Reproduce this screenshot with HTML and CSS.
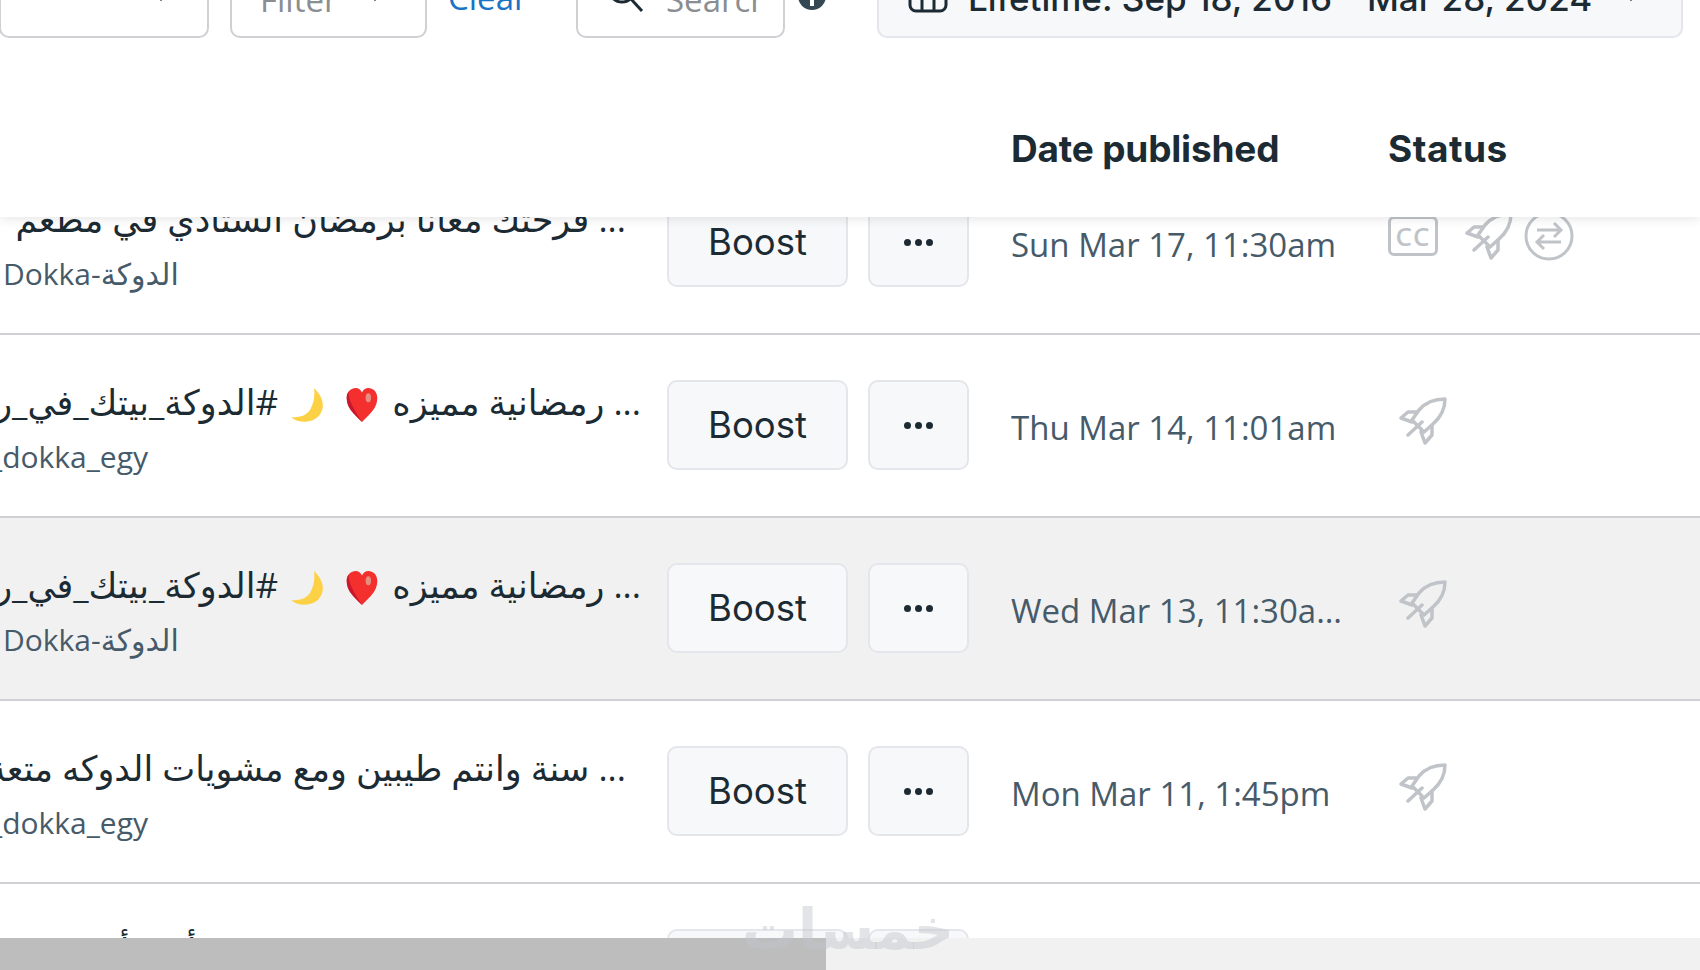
FILE: index.html
```html
<!DOCTYPE html>
<html lang="en">
<head>
    <meta charset="UTF-8">
    <meta name="viewport" content="width=device-width, initial-scale=1.0">
    <title>Published posts</title>
    <link rel="stylesheet" href="styles.css">
</head>
<body>
    <div class="page">
        <div class="top">
            <div class="toolbar">
                <div class="control first"><svg class="chev" viewBox="0 0 20 12"><path d="M3 2l7 7 7-7"/></svg></div>
                <div class="control filter"><span class="muted">Filter</span><svg class="chev" viewBox="0 0 20 12"><path d="M3 2l7 7 7-7"/></svg></div>
                <a class="clear">Clear</a>
                <div class="control search">
                    <svg class="lens" viewBox="0 0 40 40"><circle cx="16" cy="16" r="13"/><path d="M25 26l11 12"/></svg>
                    <span class="muted">Search</span>
                </div>
                <span class="info"></span>
                <div class="control dates">
                    <svg class="cal" viewBox="0 0 40 40"><rect x="2" y="2" width="36" height="36" rx="6"/><path d="M2 22h36M14 22v16M26 22v16"/></svg>
                    <span>Lifetime: Sep 18, 2016 - Mar 28, 2024</span>
                    <svg class="chev" viewBox="0 0 20 12"><path d="M3 2l7 7 7-7"/></svg>
                </div>
            </div>
            <div class="head">
                <div class="th-date">Date published</div>
                <div class="th-status">Status</div>
            </div>
        </div>

        <div class="rows">
            <div class="row">
                <div class="post short">
                    <div class="caption" dir="rtl">... فرحتك معانا برمضان الستادي في مطعم</div>
                    <div class="account">Dokka-الدوكة</div>
                </div>
                <button class="btn boost">Boost</button>
                <button class="btn more"><i></i><i></i><i></i></button>
                <div class="date">Sun Mar 17, 11:30am</div>
                <div class="status first-status">
                    <span class="cc">CC</span>
                    <svg class="rocket"><use href="#rocket"/></svg>
                    <svg class="swap" viewBox="0 0 50 50"><circle cx="25" cy="25" r="23"/><path d="M13 19h24M30 12l7 7-7 7M37 31H13M20 24l-7 7 7 7"/></svg>
                </div>
            </div>
            <div class="row">
                <div class="post">
                    <div class="caption" dir="rtl">... رمضانية مميزه <svg class="emoji"><use href="#heart"/></svg> <svg class="emoji moon"><use href="#moon"/></svg> #الدوكة_بيتك_في_رمضان</div>
                    <div class="account handle">_dokka_egy</div>
                </div>
                <button class="btn boost">Boost</button>
                <button class="btn more"><i></i><i></i><i></i></button>
                <div class="date">Thu Mar 14, 11:01am</div>
                <div class="status"><svg class="rocket"><use href="#rocket"/></svg></div>
            </div>
            <div class="row hover">
                <div class="post">
                    <div class="caption" dir="rtl">... رمضانية مميزه <svg class="emoji"><use href="#heart"/></svg> <svg class="emoji moon"><use href="#moon"/></svg> #الدوكة_بيتك_في_رمضان</div>
                    <div class="account">Dokka-الدوكة</div>
                </div>
                <button class="btn boost">Boost</button>
                <button class="btn more"><i></i><i></i><i></i></button>
                <div class="date">Wed Mar 13, 11:30am</div>
                <div class="status"><svg class="rocket"><use href="#rocket"/></svg></div>
            </div>
            <div class="row">
                <div class="post short">
                    <div class="caption" dir="rtl">... سنة وانتم طيبين ومع مشويات الدوكه متعة رمضان</div>
                    <div class="account handle">_dokka_egy</div>
                </div>
                <button class="btn boost">Boost</button>
                <button class="btn more"><i></i><i></i><i></i></button>
                <div class="date">Mon Mar 11, 1:45pm</div>
                <div class="status"><svg class="rocket"><use href="#rocket"/></svg></div>
            </div>
            <div class="row">
                <div class="post short">
                    <div class="caption" dir="rtl">... شهر سعيد مع مشوي شهي أحن أجمع</div>
                    <div class="account">Dokka-الدوكة</div>
                </div>
                <button class="btn boost"></button>
                <button class="btn more"></button>
            </div>
        </div>

        <div class="scrollbar"><div class="thumb"></div></div>
        <div class="watermark" dir="rtl">خمسات</div>
    </div>

    <svg class="defs" width="0" height="0">
        <symbol id="rocket" viewBox="0 0 48 48">
            <g fill="none" stroke="#c0c4c8" stroke-width="3.5" stroke-linejoin="round" stroke-linecap="round">
                <path d="M46 2C35 2 26 6 20 13L13 23 25 35 34 27C42 20 46 12 46 2Z"/>
                <path d="M18 15H9L2 21 13 25M33 28V38L26 46 22 35M23 25 9 38"/>
            </g>
        </symbol>
        <symbol id="heart" viewBox="0 0 36 40">
            <path fill="#f4302e" d="M18 39C8 29 1 23 1 12 1 5 6 1 11 1c3 0 6 2 7 5 1-3 4-5 7-5 5 0 10 4 10 11 0 11-7 17-17 27z"/>
            <path fill="#c9172f" d="M18 39C8 29 1 23 1 12c0-3 1-5 2-7 0 11 7 21 15 34z"/>
            <ellipse cx="25" cy="12" rx="3" ry="5" fill="#e58f80"/>
        </symbol>
        <symbol id="moon" viewBox="0 0 36 36">
            <path fill="#fdd145" d="M24 1C34 10 37 24 25 32 18 36 8 36 1 30 10 31 18 28 21 21 24 15 25 8 24 1Z"/>
        </symbol>
    </svg>
</body>
</html>
```

FILE: styles.css
```css
* {
    box-sizing: border-box;
}
body {
    margin: 0;
    background: #fff;
    color: #1c2b33;
    font-family: "Open Sans", "DejaVu Sans", sans-serif;
}
.page {
    position: relative;
    width: 1700px;
    height: 970px;
    overflow: hidden;
}
.defs {
    position: absolute;
}

/* toolbar + table head stay on top of the rows */
.top {
    position: relative;
    z-index: 2;
    height: 217px;
    background: #fff;
    box-shadow: 0 2px 10px rgba(0, 0, 0, 0.1);
}
.toolbar {
    display: flex;
    align-items: flex-end;
    height: 38px;
    overflow: hidden;
}
.control {
    display: flex;
    align-items: center;
    flex-shrink: 0;
    height: 90px;
    border: 2px solid #ced0d4;
    border-radius: 10px;
    font-size: 33px;
}
.first {
    width: 210px;
    margin-left: -1px;
    justify-content: flex-end;
    padding-right: 36px;
}
.filter {
    width: 197px;
    margin-left: 21px;
    padding-left: 28px;
    justify-content: space-between;
    padding-right: 40px;
}
.muted {
    color: #8a8d91;
    margin-top: 12px;
}
.chev {
    width: 20px;
    height: 12px;
    margin-top: 6px;
}
.chev path {
    fill: none;
    stroke: #1c2b33;
    stroke-width: 3;
}
.clear {
    width: 128px;
    margin-left: 21px;
    height: 60px;
    color: #1a73c5;
    font-size: 33px;
    line-height: 40px;
}
.search {
    width: 209px;
    padding-left: 28px;
    gap: 20px;
}
.search .muted {
    width: 92px;
    overflow: hidden;
}
.lens {
    width: 40px;
    height: 40px;
    flex-shrink: 0;
}
.lens circle,
.lens path,
.cal rect,
.cal path {
    fill: none;
    stroke: #1c2b33;
    stroke-width: 3;
}
.info {
    position: relative;
    width: 28px;
    height: 28px;
    margin: 0 51px 28px 13px;
    flex-shrink: 0;
    border-radius: 50%;
    background: #344854;
}
.info::after {
    content: "";
    position: absolute;
    left: 12px;
    bottom: 4px;
    width: 4px;
    height: 10px;
    background: #fff;
}
.dates {
    width: 806px;
    padding: 0 40px 0 29px;
    gap: 20px;
    background: #f7f8fa;
    border-color: #e4e6eb;
    color: #1c2b33;
}
.dates span {
    flex: 1;
    margin-top: 9px;
    font-family: Inter, sans-serif;
    font-size: 35px;
    font-weight: 500;
    white-space: nowrap;
}
.cal {
    width: 40px;
    height: 40px;
    flex-shrink: 0;
}

.head {
    display: flex;
    align-items: center;
    height: 179px;
    padding: 41px 0 0 1011px;
    font-family: Inter, sans-serif;
    font-size: 37px;
    font-weight: 700;
    letter-spacing: -0.2px;
}
.th-date {
    width: 377px;
}
.th-status {
    letter-spacing: 0.5px;
}

/* the list is scrolled, so the first row starts under the head */
.rows {
    margin-top: -65px;
}
.row {
    display: flex;
    align-items: center;
    height: 183px;
    border-bottom: 2px solid #ced0d4;
}
.row.hover {
    background: #f1f1f1;
}
.post {
    display: flex;
    flex-direction: column;
    align-items: stretch;
    flex-shrink: 0;
    width: 667px;
    padding-right: 26px;
    margin-top: 4px;
    overflow: hidden;
}
.post.short {
    padding-right: 41px;
}
.caption {
    height: 46px;
    line-height: 46px;
    font-size: 35px;
    white-space: nowrap;
    text-align: right;
}
.emoji {
    width: 36px;
    height: 36px;
    margin: 0 3px;
    vertical-align: -8px;
}
.emoji.moon {
    margin-right: 6px;
}
.account {
    margin: 12px 0 0 3px;
    height: 40px;
    line-height: 40px;
    font-size: 30px;
    color: #465a69;
    white-space: nowrap;
}
.account.handle {
    margin-left: -11px;
}
.btn {
    flex-shrink: 0;
    height: 90px;
    margin-top: -1px;
    padding: 0;
    background: #f7f8fa;
    border: 2px solid #e4e6eb;
    border-radius: 10px;
    color: #1c2b33;
    font-family: Inter, sans-serif;
    font-size: 36.5px;
    font-weight: 400;
}
.boost {
    width: 181px;
}
.more {
    display: flex;
    align-items: center;
    justify-content: center;
    gap: 4px;
    width: 101px;
    margin-left: 20px;
}
.more i {
    width: 7px;
    height: 7px;
    border-radius: 50%;
    background: #1c2b33;
}
.date {
    width: 333px;
    margin-left: 42px;
    padding-top: 4px;
    color: #465a69;
    font-size: 33px;
    white-space: nowrap;
    overflow: hidden;
    text-overflow: ellipsis;
}
.status {
    display: flex;
    align-items: center;
    padding: 0 0 10px 55px;
}
.first-status {
    padding: 0 0 14px 44px;
}
.cc {
    width: 50px;
    height: 40px;
    margin-right: 27px;
    border: 3px solid #c0c4c8;
    border-radius: 6px;
    color: #c0c4c8;
    font-size: 26px;
    font-weight: 600;
    letter-spacing: 1px;
    line-height: 34px;
    text-align: center;
}
.rocket {
    width: 48px;
    height: 48px;
}
.swap {
    width: 50px;
    height: 50px;
    margin-left: 11px;
}
.swap circle,
.swap path {
    fill: none;
    stroke: #c0c4c8;
    stroke-width: 3;
}

.scrollbar {
    position: absolute;
    left: 0;
    right: 0;
    bottom: 0;
    height: 32px;
    background: #f1f1f1;
    z-index: 3;
}
.thumb {
    width: 826px;
    height: 32px;
    background: #bdbdbd;
}
.watermark {
    position: absolute;
    left: 748px;
    top: 890px;
    z-index: 4;
    width: 206px;
    color: rgba(190, 196, 202, 0.45);
    font-family: "DejaVu Sans", sans-serif;
    font-size: 56px;
    font-weight: 700;
    line-height: 80px;
    text-align: center;
}
```
